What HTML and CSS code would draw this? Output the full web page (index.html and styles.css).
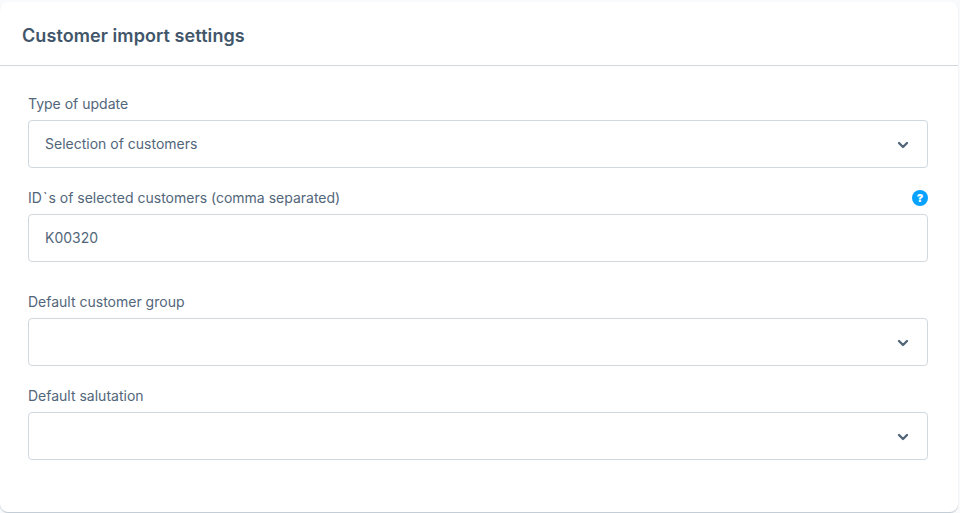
FILE: index.html
```html
<!DOCTYPE html>
<html lang="en">
<head>
<meta charset="utf-8">
<title>Customer import settings</title>
<link rel="stylesheet" href="styles.css">
</head>
<body>
<section class="card">
  <header class="card-header"><h2 class="card-title">Customer import settings</h2></header>
  <div class="card-body">
    <div class="field">
      <label class="field-label">Type of update</label>
      <div class="control">
        <span class="control-text">Selection of customers</span>
        <svg class="chevron" viewBox="0 0 12 8" width="12" height="8"><path d="M2 2 6 6l4-4" /></svg>
      </div>
    </div>
    <div class="field field-spaced">
      <div class="label-row">
        <label class="field-label">ID<span class="tick">`</span>s of selected customers (comma separated)</label>
        <span class="help">?</span>
      </div>
      <div class="control"><span class="control-text">K00320</span></div>
    </div>
    <div class="field">
      <label class="field-label">Default customer group</label>
      <div class="control">
        <span class="control-text"></span>
        <svg class="chevron" viewBox="0 0 12 8" width="12" height="8"><path d="M2 2 6 6l4-4" /></svg>
      </div>
    </div>
    <div class="field">
      <label class="field-label">Default salutation</label>
      <div class="control">
        <span class="control-text"></span>
        <svg class="chevron" viewBox="0 0 12 8" width="12" height="8"><path d="M2 2 6 6l4-4" /></svg>
      </div>
    </div>
  </div>
</section>
</body>
</html>
```
FILE: styles.css
```css
* { box-sizing: border-box; }
html, body { height: 100%; }
body {
  margin: 0;
  padding: 2px 2px 1px 0;
  background: #f9fafb;
  font-family: Inter, "Noto Sans", sans-serif;
  color: #52667a;
  overflow: hidden;
}
.card {
  height: 510px;
  background: #fff;
  border-radius: 8px;
  box-shadow: 0 1px 1px rgba(120, 138, 155, 0.45);
}
.card-header {
  height: 64px;
  padding: 5px 22px 0;
  display: flex;
  align-items: center;
  border-bottom: 1px solid #d1d9e0;
}
.card-title {
  margin: 0;
  font-size: 18px;
  line-height: 24px;
  font-weight: 600;
  letter-spacing: 0.08px;
  color: #42566a;
}
.card-body {
  padding: 27px 30px 0 28px;
  display: flex;
  flex-direction: column;
  gap: 19px;
}
.field { display: flex; flex-direction: column; gap: 5px; }
.field-spaced { margin-bottom: 10px; }
.label-row { display: flex; justify-content: space-between; align-items: center; }
.field-label { font-size: 14px; line-height: 22px; color: #52667a; }
.tick { margin: 0 1px; }
.help {
  width: 16px;
  height: 16px;
  border-radius: 50%;
  background: #0aa2ff;
  color: #fff;
  font-size: 11px;
  line-height: 16px;
  font-weight: 900;
  text-align: center;
}
.control {
  height: 48px;
  padding: 0 18px 2px 16px;
  display: flex;
  align-items: center;
  justify-content: space-between;
  background: #fff;
  border: 1px solid #d1d9e0;
  border-radius: 4px;
  font-size: 14px;
}
.control-text { color: #52667a; }
.chevron { margin-top: 4px; fill: none; stroke: #52667a; stroke-width: 2.4; stroke-linecap: round; stroke-linejoin: round; }
```
